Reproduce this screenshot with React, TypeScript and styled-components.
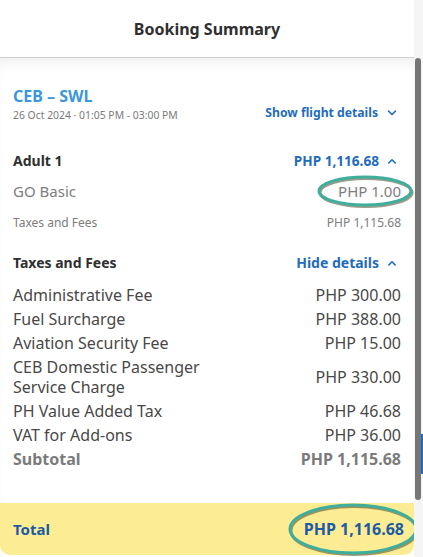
import React from "react";
import styled, { createGlobalStyle } from "styled-components";

const Global = createGlobalStyle`
  html, body { margin: 0; padding: 0; background: #ffffff; }
  body { font-family: "Noto Sans", "Open Sans", Arial, sans-serif; }
  * { box-sizing: border-box; }
`;

const Page = styled.div`
  width: 423px;
  height: 557px;
  display: flex;
  overflow: hidden;
  background: #ffffff;
`;

const Panel = styled.div`
  width: 414px;
  display: flex;
  flex-direction: column;
`;

const Header = styled.header`
  height: 58px;
  flex: none;
  display: flex;
  align-items: center;
  justify-content: center;
  border-bottom: 1px solid #cfcfcf;
  font-size: 16px;
  font-weight: 700;
  color: #2f2f2f;
`;

const Body = styled.div`
  flex: 1;
  padding: 27px 13px 0 13px;
  box-shadow: inset 0 10px 14px -8px rgba(0, 0, 0, 0.09);
`;

const Row = styled.div<{ $align?: string; $mt?: number }>`
  display: flex;
  justify-content: space-between;
  align-items: ${(p) => p.$align || "center"};
  margin-top: ${(p) => p.$mt || 0}px;
`;

const Route = styled.div`
  display: flex;
  flex-direction: column;
`;

const RouteTitle = styled.div`
  font-size: 16px;
  font-weight: 700;
  line-height: 22px;
  color: #3a97db;
`;

const DateText = styled.div`
  font-size: 10.4px;
  line-height: 16px;
  color: #7a7a7a;
`;

const LinkText = styled.span<{ $size?: number; $gap?: number }>`
  display: inline-flex;
  align-items: center;
  gap: ${(p) => p.$gap || 8}px;
  font-size: ${(p) => p.$size || 14}px;
  font-weight: 700;
  line-height: 20px;
  color: #1f6cbd;
`;

const Chevron = ({ up }: { up?: boolean }) => (
  <svg width="10" height="6" viewBox="0 0 10 6" style={{ marginRight: 4 }}>
    <path
      d={up ? "M1.8 5 L5 1.8 L8.2 5" : "M1.5 1 L5 4.5 L8.5 1"}
      fill="none"
      stroke="#1f6cbd"
      strokeWidth="1.6"
      strokeLinecap="round"
      strokeLinejoin="round"
    />
  </svg>
);

const Label = styled.span<{ $size: number; $weight?: number; $color: string; $lh: number }>`
  font-size: ${(p) => p.$size}px;
  font-weight: ${(p) => p.$weight || 400};
  color: ${(p) => p.$color};
  line-height: ${(p) => p.$lh}px;
`;

const Amount = styled.span<{ $size: number; $weight?: number; $color: string; $lh: number }>`
  position: relative;
  font-size: ${(p) => p.$size}px;
  font-weight: ${(p) => p.$weight || 400};
  color: ${(p) => p.$color};
  line-height: ${(p) => p.$lh}px;
  white-space: nowrap;
`;

const FeeList = styled.div`
  margin-top: 10px;
  display: flex;
  flex-direction: column;
`;

const FeeRow = styled.div<{ $bold?: boolean }>`
  display: flex;
  justify-content: space-between;
  align-items: center;
  padding: 2px 0;
  font-size: 16px;
  line-height: 20px;
  color: ${(p) => (p.$bold ? "#7b7b7b" : "#484848")};
  font-weight: ${(p) => (p.$bold ? 700 : 400)};
`;

const FeeName = styled.span`
  max-width: 210px;
`;

const Footer = styled.footer`
  flex: none;
  height: 52px;
  margin-bottom: 2px;
  background: #fcec94;
  border-radius: 0 0 10px 10px;
  display: flex;
  justify-content: space-between;
  align-items: center;
  padding: 0 10px 0 13px;
  color: #1d5aa5;
  font-weight: 700;
`;

const TotalLabel = styled.span`
  font-size: 15px;
`;

const TotalAmount = styled.span`
  position: relative;
  font-size: 16px;
`;

const Track = styled.div`
  width: 9px;
  background: #f5f5f5;
  display: flex;
  flex-direction: column;
  align-items: flex-end;
  position: relative;
`;

const Thumb = styled.div`
  margin-top: 58px;
  margin-right: 2px;
  width: 6px;
  height: 442px;
  border-radius: 3px;
  background: #767676;
`;

const BlueEdge = styled.div`
  position: absolute;
  right: 0;
  top: 434px;
  width: 2px;
  height: 40px;
  background: #1f6cbd;
`;

const Ring = styled.svg`
  position: absolute;
  overflow: visible;
  pointer-events: none;
`;

const Ellipse = ({ w, h, left, top }: { w: number; h: number; left: number; top: number }) => (
  <Ring width={w} height={h} style={{ left, top }} viewBox={`0 0 ${w} ${h}`}>
    <ellipse
      cx={w / 2 + 1}
      cy={h / 2 + 1.5}
      rx={w / 2 - 2}
      ry={h / 2 - 2}
      fill="none"
      stroke="#4a4a2a"
      strokeOpacity="0.55"
      strokeWidth="3"
    />
    <ellipse
      cx={w / 2}
      cy={h / 2}
      rx={w / 2 - 2}
      ry={h / 2 - 2}
      fill="none"
      stroke="#3fae9c"
      strokeWidth="3"
    />
  </Ring>
);

const fees: [string, string][] = [
  ["Administrative Fee", "PHP 300.00"],
  ["Fuel Surcharge", "PHP 388.00"],
  ["Aviation Security Fee", "PHP 15.00"],
  ["CEB Domestic Passenger Service Charge", "PHP 330.00"],
  ["PH Value Added Tax", "PHP 46.68"],
  ["VAT for Add-ons", "PHP 36.00"],
];

export default function App() {
  return (
    <>
      <Global />
      <Page>
        <Panel>
          <Header>Booking Summary</Header>
          <Body>
            <Row $align="flex-end">
              <Route>
                <RouteTitle>CEB – SWL</RouteTitle>
                <DateText>26 Oct 2024 · 01:05 PM - 03:00 PM</DateText>
              </Route>
              <LinkText $size={12.2} $gap={9}>
                Show flight details <Chevron />
              </LinkText>
            </Row>
            <Row $mt={28}>
              <Label $size={14} $weight={700} $color="#2f2f2f" $lh={20}>
                Adult 1
              </Label>
              <LinkText $size={13.6}>
                PHP 1,116.68 <Chevron up />
              </LinkText>
            </Row>
            <Row $mt={10}>
              <Label $size={15} $color="#7d7d7d" $lh={20}>
                GO Basic
              </Label>
              <Amount $size={15} $color="#7d7d7d" $lh={20}>
                PHP 1.00
                <Ellipse w={96} h={32} left={-21} top={-6} />
              </Amount>
            </Row>
            <Row $mt={14}>
              <Label $size={12} $color="#7d7d7d" $lh={16}>
                Taxes and Fees
              </Label>
              <Amount $size={12} $color="#7d7d7d" $lh={16}>
                PHP 1,115.68
              </Amount>
            </Row>
            <Row $mt={22}>
              <Label $size={14} $weight={700} $color="#2f2f2f" $lh={20}>
                Taxes and Fees
              </Label>
              <LinkText>
                Hide details <Chevron up />
              </LinkText>
            </Row>
            <FeeList>
              {fees.map(([n, v]) => (
                <FeeRow key={n}>
                  <FeeName>{n}</FeeName>
                  <span>{v}</span>
                </FeeRow>
              ))}
              <FeeRow $bold>
                <span>Subtotal</span>
                <span>PHP 1,115.68</span>
              </FeeRow>
            </FeeList>
          </Body>
          <Footer>
            <TotalLabel>Total</TotalLabel>
            <TotalAmount>
              PHP 1,116.68
              <Ellipse w={130} h={52} left={-16} top={-15} />
            </TotalAmount>
          </Footer>
        </Panel>
        <Track>
          <Thumb />
          <BlueEdge />
        </Track>
      </Page>
    </>
  );
}
